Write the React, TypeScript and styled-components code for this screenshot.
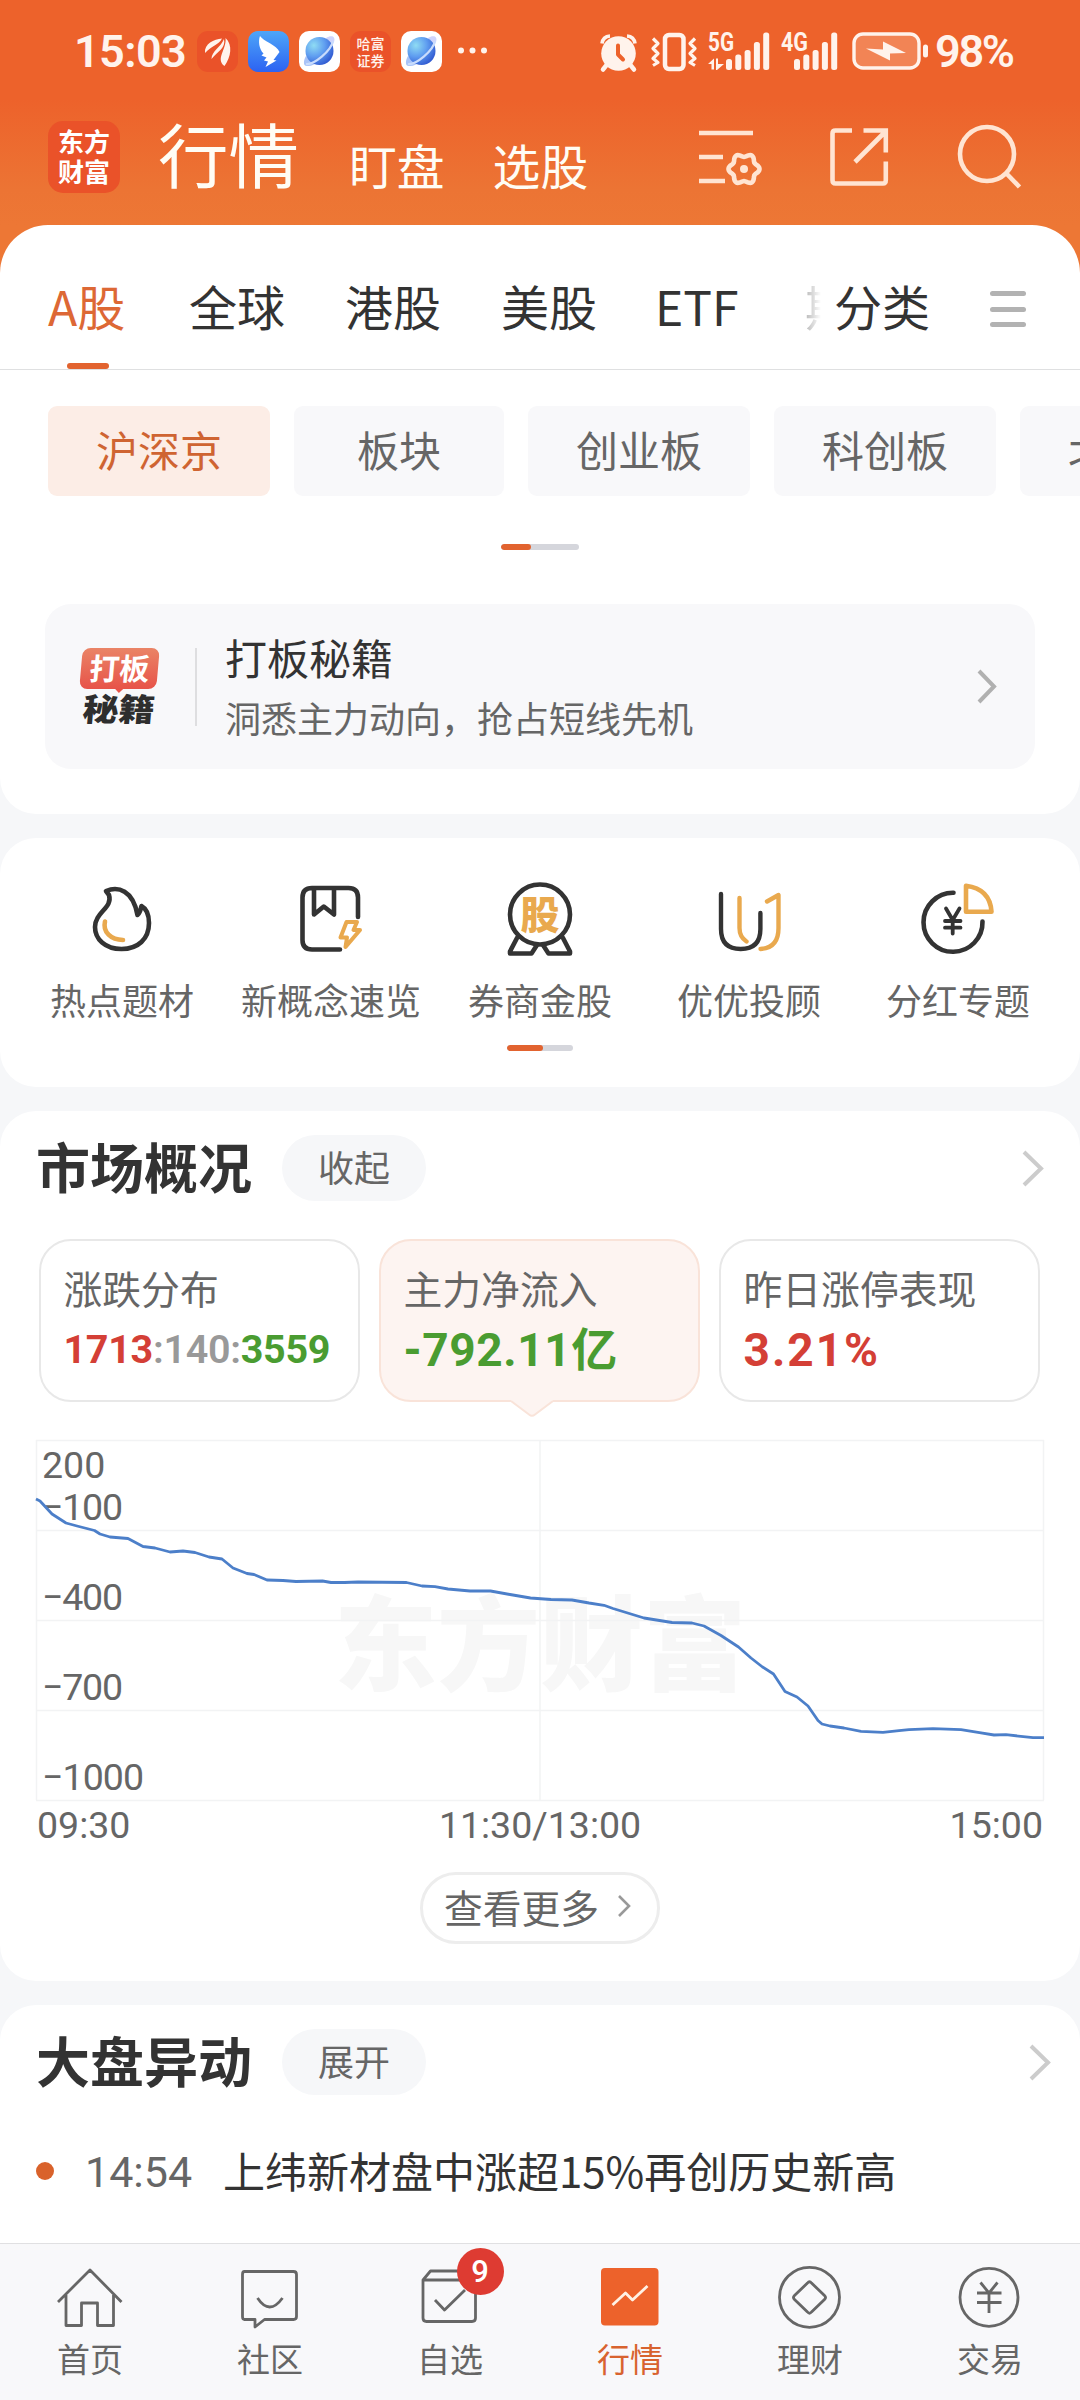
import React from "react";
import styled, { createGlobalStyle } from "styled-components";

const cjk = `"Noto Sans CJK SC", "Noto Sans", sans-serif`;
const num = `Roboto, "Noto Sans CJK SC", sans-serif`;

const Global = createGlobalStyle`
  * { box-sizing: border-box; }
  body { margin: 0; background: #f6f7f9; font-family: ${cjk}; color: #333; }
  svg { display: block; flex: none; }
`;

const Screen = styled.div`
  width: 1080px;
  height: 2400px;
  overflow: hidden;
  display: flex;
  flex-direction: column;
  background: linear-gradient(#ed622b 0, #ed622b 100px, #ec7434 190px, #ed7735 225px, #ed7735 300px, #f6f7f9 300px);
`;

/* ---------- status bar ---------- */
const StatusBar = styled.div`
  height: 103px;
  flex: none;
  display: flex;
  align-items: center;
  padding: 0 65px 0 74px;
  color: #fff3ec;
`;
const Clock = styled.span`
  width: 123px;
  font: 600 45px/52px ${num};
  letter-spacing: -0.6px;
`;
const AppIcons = styled.div`
  display: flex;
  gap: 10px;
  flex: 1;
`;
const MiniLogo = styled.div`
  width: 41px;
  height: 41px;
  border-radius: 11px;
  background: #ea5229;
  display: flex;
  flex-direction: column;
  align-items: center;
  justify-content: center;
  font: 500 14px/17px ${cjk};
  color: #fff3ec;
`;
const Percent = styled.span`
  width: 80px;
  margin-left: 6px;
  font: 600 45px/52px ${num};
  letter-spacing: -2.3px;
  white-space: nowrap;
`;

/* ---------- title bar ---------- */
const TitleBar = styled.div`
  height: 122px;
  flex: none;
  display: flex;
  align-items: flex-start;
  padding: 0 58px 0 48px;
`;
const Logo = styled.div`
  width: 72px;
  height: 72px;
  margin: 18px 38px 0 0;
  border-radius: 15px;
  background: #ea5229;
  color: #fff;
  display: flex;
  flex-direction: column;
  align-items: center;
  justify-content: center;
  font: 700 26px/30px ${cjk};
  padding-bottom: 2px;
`;
const TitleTab = styled.span<{ $main?: boolean }>`
  font-size: ${(p) => (p.$main ? 70.5 : 47.8)}px;
  line-height: 70px;
  margin: ${(p) => (p.$main ? "14px 50px 0 0" : "27px 48px 0 0")};
  color: #fffdf5;
  white-space: nowrap;
`;
const TitleActions = styled.div`
  display: flex;
  gap: 67px;
  margin: 20px 0 0 auto;
`;

/* ---------- panels ---------- */
const Panel = styled.section<{ $h: number; $top?: boolean; $gap?: number }>`
  width: 1080px;
  height: ${(p) => p.$h}px;
  flex: none;
  margin-bottom: ${(p) => p.$gap ?? 24}px;
  background: #fff;
  border-radius: ${(p) => (p.$top ? "48px 48px 36px 36px" : "36px")};
  overflow: hidden;
`;

const Tabs = styled.nav`
  height: 145px;
  display: flex;
  padding: 0 54px 0 48px;
  border-bottom: 1px solid #dfe0e1;
`;
const Tab = styled.div<{ $on?: boolean; $w: number }>`
  width: ${(p) => p.$w}px;
  flex: none;
  padding-top: 47px;
  font-size: 48px;
  line-height: 66px;
  color: ${(p) => (p.$on ? "#dd6835" : "#333")};
  white-space: nowrap;
  display: flex;
  flex-direction: column;
  justify-content: space-between;
  &::first-letter { letter-spacing: ${(p) => (p.$on ? 3 : 0)}px; }
  &::after {
    content: "";
    width: 42px;
    height: 6px;
    margin-left: 19px;
    border-radius: 3px;
    background: ${(p) => (p.$on ? "#e2632f" : "transparent")};
  }
`;
const CutTab = styled.div`
  width: 16px;
  flex: none;
  margin-right: 13px;
  padding-top: 47px;
  overflow: hidden;
  font-size: 48px;
  line-height: 66px;
  color: #999;
  -webkit-mask-image: linear-gradient(90deg, rgba(0, 0, 0, 0.7), transparent);
`;
const Burger = styled.div`
  width: 36px;
  height: 36px;
  margin: 66px 0 0 auto;
  display: flex;
  flex-direction: column;
  justify-content: space-between;
  & > i { height: 5px; border-radius: 3px; background: #b2b2b2; }
`;

const Chips = styled.div`
  display: flex;
  gap: 24px;
  padding: 36px 0 0 48px;
`;
const Chip = styled.div<{ $on?: boolean; $w: number }>`
  min-width: ${(p) => p.$w}px;
  flex: none;
  height: 90px;
  padding: 0 47px 5px;
  border-radius: 9px;
  display: flex;
  align-items: center;
  justify-content: center;
  font-size: 42px;
  line-height: 60px;
  background: ${(p) => (p.$on ? "#fcede6" : "#f8f8fa")};
  color: ${(p) => (p.$on ? "#cf6432" : "#666")};
`;

const Pager = styled.div<{ $w: number; $on: number; $mt: number }>`
  width: ${(p) => p.$w}px;
  height: 6px;
  margin: ${(p) => p.$mt}px auto 0;
  border-radius: 3px;
  background: #d5d6dc;
  overflow: hidden;
  &::before {
    content: "";
    display: block;
    width: ${(p) => p.$on}px;
    height: 6px;
    border-radius: 3px;
    background: #e2632f;
  }
`;

const Promo = styled.div`
  height: 165px;
  margin: 54px 45px 0;
  padding: 0 38px 0 34px;
  border-radius: 26px;
  background: #f8f8fa;
  display: flex;
  align-items: center;
`;
const PromoBadge = styled.div`
  width: 80px;
  height: 78px;
  display: flex;
  flex-direction: column;
  align-items: center;
  gap: 2px;
`;
const BadgeTop = styled.span`
  position: relative;
  width: 77px;
  height: 41px;
  border-radius: 8px;
  transform: skewX(-5deg);
  background: linear-gradient(#ea8466, #e75349);
  color: #fff;
  text-align: center;
  font: 700 30px/38px ${cjk};
  &::after {
    content: "";
    position: absolute;
    left: 35px;
    top: 40px;
    border: 5px solid transparent;
    border-top-color: #e75349;
    border-bottom: 0;
  }
`;
const BadgeBottom = styled.span`
  font: 900 36px/32px ${cjk};
  color: #2e2e2e;
  transform: skewX(-5deg) scaleY(0.88);
  white-space: nowrap;
`;
const PromoText = styled.div`
  height: 78px;
  margin-left: 36px;
  padding-left: 28px;
  border-left: 2px solid #dedee0;
  flex: 1;
  display: flex;
  flex-direction: column;
  justify-content: center;
  white-space: nowrap;
  padding-bottom: 3px;
`;
const PromoTitle = styled.span`
  font-size: 42px;
  line-height: 64px;
`;
const PromoSub = styled.span`
  font-size: 36px;
  line-height: 57px;
  color: #666;
`;

/* ---------- shortcuts ---------- */
const Shortcuts = styled.div`
  display: grid;
  grid-template-columns: repeat(5, 209px);
  padding: 39.5px 0 0 17.5px;
`;
const Shortcut = styled.div`
  display: flex;
  flex-direction: column;
  align-items: center;
  font-size: 36px;
  line-height: 50px;
  color: #666;
  gap: 16px;
  white-space: nowrap;
`;

/* ---------- section head ---------- */
const Head = styled.div<{ $r: number }>`
  height: 114px;
  padding: 0 ${(p) => p.$r}px 0 36px;
  display: flex;
  align-items: center;
`;
const HeadTitle = styled.h2`
  margin: 0 30px 0 0;
  font: 700 54px/78px ${cjk};
  padding-bottom: 5px;
`;
const Pill = styled.span`
  width: 144px;
  height: 66px;
  border-radius: 33px;
  background: #f6f7f9;
  color: #666;
  font-size: 36px;
  line-height: 62px;
  text-align: center;
  margin-right: auto;
`;

const Stats = styled.div`
  display: grid;
  grid-template-columns: repeat(3, 321px);
  gap: 19px;
  padding: 14px 0 0 39px;
`;
const Stat = styled.div<{ $on?: boolean }>`
  position: relative;
  height: 163px;
  padding: 17px 0 0 22.5px;
  border: 2px solid ${(p) => (p.$on ? "#f9e3d9" : "#e8e8e8")};
  border-radius: 32px;
  background: ${(p) => (p.$on ? "#fdf4f1" : "#fff")};
  display: flex;
  flex-direction: column;
  white-space: nowrap;
`;
const Pointer = styled.svg`
  position: absolute;
  left: 130px;
  top: 158px;
`;
const StatLabel = styled.span`
  font-size: 38.8px;
  line-height: 58px;
  color: #666;
`;
const StatValue = styled.span<{ $c: string; $ls: number; $small?: boolean }>`
  margin-top: 4px;
  font: 700 ${(p) => (p.$small ? 39.5 : 46)}px/60px ${num};
  letter-spacing: ${(p) => p.$ls}px;
  color: ${(p) => p.$c};
  & > b { font-weight: 600; color: #999; }
  & > em { font-style: normal; color: #4a9c31; }
`;

/* ---------- chart ---------- */
const Chart = styled.svg`
  margin: 38px 0 0 36px;
  overflow: visible;
`;
const Times = styled.div`
  display: grid;
  grid-template-columns: 1fr auto 1fr;
  padding: 1px 37px 0;
  font: 400 37.5px/48px ${num};
  color: #666;
  & > :last-child { text-align: right; }
`;
const More = styled.div`
  width: 240px;
  height: 72px;
  margin: 23px auto 0;
  padding: 0 4px 4px 0;
  border: 3px solid #ededed;
  border-radius: 36px;
  display: flex;
  align-items: center;
  justify-content: center;
  gap: 18px;
  font-size: 38.8px;
  line-height: 56px;
  color: #666;
`;

/* ---------- news ---------- */
const News = styled.div`
  height: 104px;
  display: flex;
  align-items: center;
  padding-left: 36px;
  white-space: nowrap;
`;
const Dot = styled.i`
  width: 18px;
  height: 18px;
  border-radius: 9px;
  background: #d9622b;
  margin-right: 31px;
`;
const NewsTime = styled.span`
  width: 138px;
  padding-top: 2px;
  font: 400 43px/60px ${num};
  color: #666;
`;
const NewsTitle = styled.span`
  font-size: 42px;
  line-height: 60px;
  padding-bottom: 3px;
`;

/* ---------- bottom navigation ---------- */
const BottomNav = styled.footer`
  height: 157px;
  flex: none;
  display: grid;
  grid-template-columns: repeat(6, 180px);
  border-top: 1px solid #e0e0e2;
  background: #f8f8fa;
`;
const NavItem = styled.div<{ $on?: boolean }>`
  position: relative;
  padding-top: 18px;
  display: flex;
  flex-direction: column;
  align-items: center;
  font-size: 33px;
  line-height: 48px;
  color: ${(p) => (p.$on ? "#d8632f" : "#666")};
`;
const NavBadge = styled.span`
  position: absolute;
  left: 96.5px;
  top: 4px;
  width: 47px;
  height: 47px;
  border-radius: 24px;
  background: #de3b32;
  color: #fff;
  text-align: center;
  font: 500 31px/47px ${num};
`;

const Chevron = ({ w, h, c, s = 4 }: { w: number; h: number; c: string; s?: number }) => (
  <svg width={w} height={h} viewBox={`0 0 ${w} ${h}`} fill="none" stroke={c} strokeWidth={s}>
    <path d={`M2 2L${w - 3} ${h / 2}L2 ${h - 2}`} />
  </svg>
);

const Planet = ({ id }: { id: string }) => (
  <svg width="41" height="41" viewBox="0 0 41 41">
    <defs>
      <radialGradient id={id} cx="30%" cy="30%" r="80%">
        <stop offset="0" stopColor="#8fdcf3" />
        <stop offset=".5" stopColor="#5f9df0" />
        <stop offset="1" stopColor="#2d55cf" />
      </radialGradient>
    </defs>
    <rect width="41" height="41" rx="10" fill="#fff" />
    <path d="M27 7C32 4 37 5 35 11C33 15 31 18 28 20Z" fill="#cfd4fb" />
    <path d="M7 25C4 30 4 36 9 35C13 35 16 33 19 31Z" fill="#a9c4f8" />
    <circle cx="20.5" cy="20" r="14" fill={`url(#${id})`} />
    <path d="M7 33C15 34 32 20 34 10" fill="none" stroke="#c9dcfc" strokeWidth="2.2" />
  </svg>
);

const gear = (() => {
  const pts: string[] = [];
  for (let i = 0; i < 120; i++) {
    const t = (i / 120) * Math.PI * 2;
    const r = 13.8 + 1.7 * Math.cos(6 * t);
    pts.push(`${(744 + r * Math.cos(t)).toFixed(1)} ${(169 + r * Math.sin(t)).toFixed(1)}`);
  }
  return `M${pts.join("L")}Z`;
})();

const StatusIcons = () => (
  <svg width="330" height="60" viewBox="598 21.5 330 60" fill="#fff3ec">
    {/* alarm */}
    <circle cx="617.5" cy="53" r="17.3" />
    <path d="M601 43Q602 36 609 35.500M634 43Q633 36 626 35.500" fill="none" stroke="#fff3ec" strokeWidth="3.600" />
    <path d="M606 64L602 69M629 64L633 69" stroke="#fff3ec" strokeWidth="4.500" strokeLinecap="round" />
    <path d="M617 45V54L622 59" fill="none" stroke="#ed622b" strokeWidth="4" strokeLinecap="round" strokeLinejoin="round" />
    {/* vibrate */}
    <rect x="664" y="34.500" width="18.500" height="34" rx="4" fill="none" stroke="#fff3ec" strokeWidth="4.500" />
    <path d="M652 38L657 43L652 48L657 53L652 58L657 62L652 65M694 38L689 43L694 48L689 53L694 58L689 62L694 65" fill="none" stroke="#fff3ec" strokeWidth="3.200" strokeLinejoin="round" />
    {/* signals */}
    <text x="707" y="50.500" fontFamily="Roboto, sans-serif" fontWeight="700" fontSize="25.500" textLength="26" lengthAdjust="spacingAndGlyphs">5G</text>
    <text x="780" y="50.500" fontFamily="Roboto, sans-serif" fontWeight="700" fontSize="25.500" textLength="27" lengthAdjust="spacingAndGlyphs">4G</text>
    <path d="M707 63.500L713 58V69H710.500V63.500ZM715 58H717V63.500H723L716 69.500H715Z" />
    {[0, 1, 2, 3, 4].map((i) => {
      const top = [58.5, 54, 49.5, 41.5, 32][i];
      return (
        <g key={i}>
          <rect x={725 + i * 9.3} y={top} width="6" height={69.5 - top} rx="2.500" />
          <rect x={793 + i * 9.3} y={top} width="6" height={69.5 - top} rx="2.500" />
        </g>
      );
    })}
    {/* battery */}
    <rect x="853" y="33.500" width="65" height="34" rx="9" fill="#f28455" stroke="#fff3ec" strokeWidth="3.400" />
    <rect x="922" y="44" width="5" height="13" rx="2.500" />
    <path d="M865 48L882 49V41L905 52.500L889 53V60Z" />
  </svg>
);

const HeaderIcons = () => (
  <TitleActions>
    <svg width="64" height="66" viewBox="698 123 64 66" fill="none" stroke="#ffe4d2" strokeWidth="4.600">
      <path d="M699 133H753M699 157H723M699 181H725" />
      <path d={gear} />
      <circle cx="744" cy="169" r="4" fill="#ffe4d2" stroke="none" />
    </svg>
    <svg width="60" height="66" viewBox="828 123 60 66" fill="none" stroke="#ffe4d2" strokeWidth="4.600">
      <path d="M851 130.500H834.500Q831.500 130.500 831.500 133.500V180Q831.500 183.500 834.500 183.500H882Q884.800 183.500 884.800 180V161.500M862.500 130.500H884.800V152.500M854 162L884 132" />
    </svg>
    <svg width="66" height="66" viewBox="956 123 66 66" fill="none" stroke="#ffe4d2" strokeWidth="4.600">
      <circle cx="987" cy="154" r="27" />
      <path d="M1005 172L1019.500 187" />
    </svg>
  </TitleActions>
);

const dark = "#333";
const gold = "#e9a94e";
const shortcutIcons: { label: string; icon: React.ReactNode }[] = [
  {
    label: "热点题材",
    icon: (
      <svg width="76" height="80" viewBox="84 878 76 80" fill="none" strokeWidth="4.600" strokeLinecap="round" strokeLinejoin="round">
        <path stroke={dark} d="M106 891C118 886 133 890 137.500 915C140 913 141 908 141.500 906C147 909 149 915 149 923C149 939 138 949 121.500 949C105 949 95 939 95 927C95 912 113 908 109 895Z" />
        <path stroke={gold} d="M105 921.500C102.500 932 111 940 123 940" />
      </svg>
    ),
  },
  {
    label: "新概念速览",
    icon: (
      <svg width="76" height="80" viewBox="294 878 76 80" fill="none" strokeWidth="4.600" strokeLinecap="round" strokeLinejoin="round">
        <path stroke={dark} d="M359 917V897.500Q359 888 349.500 888H313Q303.500 888 303.500 897.500V940Q303.500 949.500 313 949.500H341M315 889V914.500L324.800 906.500L335 914.500V889" />
        <path stroke={gold} strokeWidth="4" d="M347.500 922H358L354.500 930H361L346.500 947L348 937.500H341.500Z" />
      </svg>
    ),
  },
  {
    label: "券商金股",
    icon: (
      <svg width="76" height="80" viewBox="502 878 76 80" fill="none" strokeWidth="4.600" strokeLinecap="round" strokeLinejoin="round" stroke={dark}>
        <circle cx="540" cy="914.500" r="30" />
        <path d="M517 938L510 951.500V953.500H531.500L537 945M563 938L570 951.500V953.500H548.500L543 945" />
        <text x="540" y="929" stroke="none" fill={gold} fontFamily='"Noto Sans CJK SC", sans-serif' fontWeight="900" fontSize="39" textAnchor="middle">股</text>
      </svg>
    ),
  },
  {
    label: "优优投顾",
    icon: (
      <svg width="76" height="80" viewBox="712 878 76 80" fill="none" strokeWidth="4.400" strokeLinecap="round" strokeLinejoin="round">
        <path stroke={gold} d="M740.500 898V928Q740.500 937 747.500 941.500M768 901.500L779.500 895V928Q779.500 948 761.500 949" />
        <path stroke={dark} d="M722 894V929Q722 949 741.700 949T761.400 929V913" />
      </svg>
    ),
  },
  {
    label: "分红专题",
    icon: (
      <svg width="76" height="80" viewBox="920 878 76 80" fill="none" strokeWidth="4.600" strokeLinecap="round" strokeLinejoin="round">
        <path stroke={dark} d="M953.500 892.800A29.500 29.500 0 1 0 982.500 921.500" />
        <path stroke={dark} strokeWidth="3.800" d="M946 908.500L952.700 920L959.500 908.500M945 921H960.500M945 927.700H960.500M952.700 920V933.500" />
        <path stroke={gold} d="M966 885.800V911.700H991.500Q990 889 966 885.800Z" />
      </svg>
    ),
  },
];

const linePoints =
  "0,59 4,61 16,74 30,83 41,86 58.5,90.5 64,94 74,97 92,98.5 107,106.5 119,108 134,112 147,111 159,112.5 173,117 186,119 197,128 211,133.5 218,134.5 231,140 247,140.5 260,141.5 286.5,141 295,142.5 308.5,142.5 322,142 370.5,142.5 386,146 399,146.7 412,149 434,151 454.5,151 474,154.5 494.5,158 515,159.5 536,160 553,163 568,165.3 577,168.5 608,178 636,182.5 656,183 668,186 685,195.5 702.5,207 715,218 726.5,227 737.5,234 749,251.5 761,257 772,266 782,280.5 786,284 794,286 808,288 825,291.3 847,292.3 863,290.7 873,289.7 897,288.7 925,289.7 943.5,292.7 958,295 970,294.7 997,297.7 1008,297.7";

const nav: { label: string; on?: boolean; badge?: string; icon: React.ReactNode }[] = [
  { label: "首页", icon: <path d="M58 2302L90 2270L121.500 2302M66 2295V2325.500H81.500V2303H97.500V2325.500H113.500V2295" /> },
  { label: "社区", icon: <path d="M64.500 2271.500H113.500Q116.500 2271.500 116.500 2274.500V2316.500Q116.500 2319.500 113.500 2319.500H84.500L75 2327V2319.500H64.500Q62.500 2319.500 62.500 2316.500V2274.500Q62.500 2271.500 64.500 2271.500ZM77.500 2298Q89.500 2316 102.500 2298" /> },
  { label: "自选", badge: "9", icon: <path d="M63 2280H115.500V2318Q115.500 2321.500 112 2321.500H66.500Q63 2321.500 63 2318V2280L70.500 2271H108L115.500 2280M75 2300L84.500 2310L105 2290" /> },
  {
    label: "行情",
    on: true,
    icon: (
      <>
        <rect x="61" y="2268" width="57.500" height="57.500" rx="4" fill="#ed622b" stroke="none" />
        <path d="M72.500 2305L85.500 2293L92.500 2300L107.500 2286" stroke="#fff1e4" />
      </>
    ),
  },
  {
    label: "理财",
    icon: (
      <>
        <circle cx="89.500" cy="2297.300" r="30" />
        <path d="M87.500 2283Q89.500 2280.500 91.500 2283L104.500 2295.500Q106.500 2297.500 104.500 2299.500L91.500 2312Q89.500 2314.500 87.500 2312L74.500 2299.500Q72.500 2297.500 74.500 2295.500Z" />
      </>
    ),
  },
  {
    label: "交易",
    icon: (
      <>
        <circle cx="89" cy="2297.300" r="29" />
        <path d="M80.500 2282.500L89 2293L97.500 2282.500M77 2293H101.500M77 2302.500H101.500M89 2293V2313" />
      </>
    ),
  },
];

export default function App() {
  return (
    <Screen>
      <Global />
      <StatusBar>
        <Clock>15:03</Clock>
        <AppIcons>
          <MiniLogo>
            <svg width="41" height="41" viewBox="0 0 41 41" fill="#fff3ec">
              <path d="M8 22C7 13 17 8 25 7.500C22 14 14 15 8 22Z" />
              <path d="M14.500 28C14.500 20 24 16 27 8C29 17 21 20 14.500 28Z" />
              <path d="M27.500 35C18 28 30 18 28.500 7C36 14 34 26 27.500 35Z" />
            </svg>
          </MiniLogo>
          <svg width="41" height="41" viewBox="0 0 41 41">
            <defs>
              <linearGradient id="wing" x2="0" y2="1">
                <stop stopColor="#4ea6f8" />
                <stop offset="1" stopColor="#2c62f2" />
              </linearGradient>
            </defs>
            <rect width="41" height="41" rx="10" fill="url(#wing)" />
            <path fill="#fff" d="M12 5C15 10 29 14 31.500 21L25.500 29L28.500 29.500L17.500 36L20 30.500L16 29.500L18.500 26.500L13.500 24.500L15.500 22.500C11 18 10 10 12 5Z" />
          </svg>
          <Planet id="planetA" />
          <MiniLogo>
            <span>哈富</span>
            <span>证券</span>
          </MiniLogo>
          <Planet id="planetB" />
          <svg width="42" height="41" viewBox="0 0 42 41" fill="#fff3ec">
            <circle cx="9" cy="19.500" r="3" />
            <circle cx="20.500" cy="19.500" r="3" />
            <circle cx="32" cy="19.500" r="3" />
          </svg>
        </AppIcons>
        <StatusIcons />
        <Percent>98%</Percent>
      </StatusBar>

      <TitleBar>
        <Logo>
          <span>东方</span>
          <span>财富</span>
        </Logo>
        <TitleTab $main>行情</TitleTab>
        <TitleTab>盯盘</TitleTab>
        <TitleTab>选股</TitleTab>
        <HeaderIcons />
      </TitleBar>

      <Panel $h={589} $top>
        <Tabs>
          <Tab $on $w={141}>A股</Tab>
          <Tab $w={156}>全球</Tab>
          <Tab $w={156}>港股</Tab>
          <Tab $w={154}>美股</Tab>
          <Tab $w={150}>ETF</Tab>
          <CutTab>期</CutTab>
          <Tab $w={100}>分类</Tab>
          <Burger><i /><i /><i /></Burger>
        </Tabs>
        <Chips>
          <Chip $on $w={222}>沪深京</Chip>
          <Chip $w={210}>板块</Chip>
          <Chip $w={222}>创业板</Chip>
          <Chip $w={222}>科创板</Chip>
          <Chip $w={222}>北交所</Chip>
        </Chips>
        <Pager $w={78} $on={30} $mt={48} />
        <Promo>
          <PromoBadge>
            <BadgeTop>打板</BadgeTop>
            <BadgeBottom>秘籍</BadgeBottom>
          </PromoBadge>
          <PromoText>
            <PromoTitle>打板秘籍</PromoTitle>
            <PromoSub>洞悉主力动向，抢占短线先机</PromoSub>
          </PromoText>
          <Chevron w={20} h={35} c="#b0b0b0" />
        </Promo>
      </Panel>

      <Panel $h={249}>
        <Shortcuts>
          {shortcutIcons.map((s) => (
            <Shortcut key={s.label}>
              {s.icon}
              <span>{s.label}</span>
            </Shortcut>
          ))}
        </Shortcuts>
        <Pager $w={66} $on={36} $mt={21.5} />
      </Panel>

      <Panel $h={870}>
        <Head $r={36}>
          <HeadTitle>市场概况</HeadTitle>
          <Pill>收起</Pill>
          <Chevron w={22} h={37} c="#ccc" />
        </Head>
        <Stats>
          <Stat>
            <StatLabel>涨跌分布</StatLabel>
            <StatValue $small $ls={-0.3} $c="#d43f36">1713<b>:140:</b><em>3559</em></StatValue>
          </Stat>
          <Stat $on>
            <StatLabel>主力净流入</StatLabel>
            <StatValue $ls={0.6} $c="#4a9c31">-792.11亿</StatValue>
            <Pointer width="42" height="20" viewBox="0 0 42 20">
              <path d="M0 0V2L18 15.500Q21 18 24 15.500L42 2V0Z" fill="#fdf4f1" />
              <path d="M0 2L18 15.500Q21 18 24 15.500L42 2" fill="none" stroke="#f9e3d9" strokeWidth="2" />
            </Pointer>
          </Stat>
          <Stat>
            <StatLabel>昨日涨停表现</StatLabel>
            <StatValue $ls={2} $c="#d43f36">3.21%</StatValue>
          </Stat>
        </Stats>
        <Chart width="1008" height="360" viewBox="0 0 1008 360">
          <text x="504" y="243" textAnchor="middle" fontFamily='"Noto Sans CJK SC", sans-serif' fontWeight="900" fontSize="103" fill="#f7f7f7">东方财富</text>
          <path d="M0 .5H1008M0 90.500H1008M0 180.500H1008M0 270.500H1008M0 360.500H1008M.5 0V360M504 0V360M1007.500 0V360" stroke="#f2f3f4" strokeWidth="1.500" />
          <g fontFamily="Roboto, sans-serif" fontSize="37.500" fill="#666">
            <text x="6" y="38">200</text>
            <text x="6" y="80" textLength="81">−100</text>
            <text x="6" y="170" textLength="81">−400</text>
            <text x="6" y="260" textLength="81">−700</text>
            <text x="6" y="350" textLength="102">−1000</text>
          </g>
          <polyline points={linePoints} fill="none" stroke="#4c7fc9" strokeWidth="2.800" strokeLinejoin="round" />
        </Chart>
        <Times>
          <span>09:30</span>
          <span>11:30/13:00</span>
          <span>15:00</span>
        </Times>
        <More>
          <span>查看更多</span>
          <Chevron w={15} h={24} c="#999" s={2.6} />
        </More>
      </Panel>

      <Panel $h={300} $gap={-62}>
        <Head $r={29}>
          <HeadTitle>大盘异动</HeadTitle>
          <Pill>展开</Pill>
          <Chevron w={22} h={37} c="#ccc" />
        </Head>
        <News>
          <Dot />
          <NewsTime>14:54</NewsTime>
          <NewsTitle>上纬新材盘中涨超15%再创历史新高</NewsTitle>
        </News>
      </Panel>

      <BottomNav>
        {nav.map((n) => (
          <NavItem key={n.label} $on={n.on}>
            <svg width="80" height="72" viewBox="50 2262 80 72" fill="none" stroke="#666" strokeWidth="2.800" strokeLinejoin="round">
              {n.icon}
            </svg>
            {n.badge && <NavBadge>{n.badge}</NavBadge>}
            <span>{n.label}</span>
          </NavItem>
        ))}
      </BottomNav>
    </Screen>
  );
}
